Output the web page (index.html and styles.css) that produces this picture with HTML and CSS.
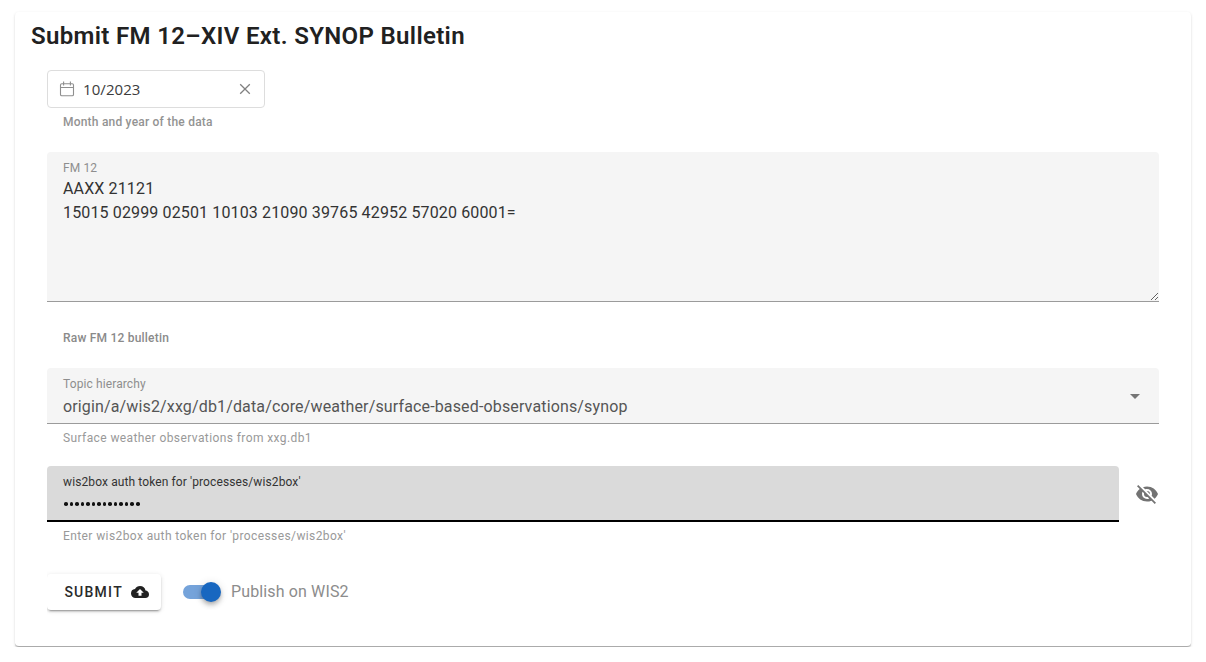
FILE: index.html
```html
<!DOCTYPE html>
<html lang="en">
<head>
<meta charset="utf-8">
<title>Submit FM 12–XIV Ext. SYNOP Bulletin</title>
<link rel="stylesheet" href="styles.css">
</head>
<body>
<main class="card">
  <h2 class="title"><span>Submit FM 12–XIV Ext. SYNOP Bulletin</span></h2>
  <form class="form">
    <div class="date">
      <svg class="date-icon" width="16" height="16" viewBox="0 0 16 16" fill="none" stroke="#8f8f8f" stroke-width="1.1"><rect x="1.5" y="2.7" width="13" height="12" rx="1.3"/><path d="M1.5 6.5h13M4.6 .6v3.8M11.4 .6v3.8"/></svg>
      <span class="date-value">10/2023</span>
      <svg width="12" height="12" viewBox="0 0 12 12" fill="none" stroke="#808080" stroke-width="1.3"><path d="M1.2 1.2l9.6 9.6M10.8 1.2l-9.6 9.6"/></svg>
    </div>
    <div class="caption date-caption"><span>Month and year of the data</span></div>

    <div class="field bulletin">
      <label class="label" for="fm12"><span>FM 12</span></label>
      <textarea id="fm12" class="area" spellcheck="false">AAXX 21121
15015 02999 02501 10103 21090 39765 42952 57020 60001=</textarea>
    </div>
    <div class="caption bulletin-caption"><span>Raw FM 12 bulletin</span></div>

    <div class="field topic">
      <div class="topic-text">
        <div class="label"><span>Topic hierarchy</span></div>
        <div class="topic-value"><span>origin/a/wis2/xxg/db1/data/core/weather/surface-based-observations/synop</span></div>
      </div>
      <svg width="24" height="24" viewBox="0 0 24 24" fill="#757575"><path d="M7 10l5 5 5-5z"/></svg>
    </div>
    <div class="hint"><span>Surface weather observations from xxg.db1</span></div>

    <div class="token-row">
      <div class="field token">
        <div class="label token-label"><span>wis2box auth token for 'processes/wis2box'</span></div>
        <div class="dots"><i></i><i></i><i></i><i></i><i></i><i></i><i></i><i></i><i></i><i></i><i></i><i></i><i></i><i></i></div>
      </div>
      <svg width="24" height="24" viewBox="0 0 24 24" fill="#737373"><path d="M11.83 9L15 12.16V12a3 3 0 0 0-3-3h-.17m-4.3.8l1.55 1.55c-.05.21-.08.42-.08.65a3 3 0 0 0 3 3c.22 0 .44-.03.65-.08l1.55 1.55c-.67.33-1.41.53-2.2.53a5 5 0 0 1-5-5c0-.79.2-1.53.53-2.2M2 4.27l2.28 2.28.45.45C3.08 8.3 1.78 10 1 12c1.73 4.39 6 7.5 11 7.5 1.55 0 3.03-.3 4.38-.84l.43.42L19.73 22 21 20.73 3.27 3M12 7a5 5 0 0 1 5 5c0 .64-.13 1.26-.36 1.82l2.93 2.93c1.5-1.25 2.7-2.89 3.43-4.75-1.73-4.39-6-7.5-11-7.5-1.4 0-2.74.25-4 .7l2.17 2.15C10.74 7.13 11.35 7 12 7z"/></svg>
    </div>
    <div class="hint token-hint"><span>Enter wis2box auth token for 'processes/wis2box'</span></div>

    <div class="actions">
      <button class="submit" type="button"><span>SUBMIT</span>
        <svg width="18" height="18" viewBox="0 0 24 24" fill="#212121"><path d="M14 13v4h-4v-4H7l5-5 5 5m2.35-2.97A7.49 7.49 0 0 0 12 4C9.11 4 6.6 5.64 5.35 8.03A6.004 6.004 0 0 0 0 14a6 6 0 0 0 6 6h13a5 5 0 0 0 5-5c0-2.64-2.05-4.78-4.65-4.97z"/></svg>
      </button>
      <div class="switch"><div class="thumb"></div></div>
      <span class="switch-label">Publish on WIS2</span>
    </div>
  </form>
</main>
</body>
</html>
```
FILE: styles.css
```css
* { box-sizing: border-box; }
body {
  margin: 0;
  padding: 12px 15px 0;
  background: #fff;
  font-family: Roboto, "Liberation Sans", sans-serif;
  color: #212121;
}
.card {
  height: 635px;
  width: 1176px;
  padding: 8px 16px;
  border-bottom: 1px solid #ababab;
  border-radius: 4px;
  box-shadow: 0 1px 1px 0 rgba(0,0,0,.12), 0 1px 3px 0 rgba(0,0,0,.12);
}
.title {
  margin: 0;
  font-size: 24px;
  line-height: 32px;
  font-weight: 600;
  letter-spacing: .34px;
}
.form { padding: 18px 16px 0; }
.date {
  width: 218px;
  height: 38px;
  padding: 0 13px 0 11px;
  border: 1px solid #ddd;
  border-radius: 4px;
  display: flex;
  align-items: center;
}
.date-value {
  flex: 1;
  margin-left: 8px;
  font-family: "Open Sans", sans-serif;
  font-size: 15px;
  letter-spacing: .08px;
  color: #3c3c3c;
}
.caption {
  padding-left: 16px;
  font-size: 12px;
  line-height: 16px;
  font-weight: 500;
  letter-spacing: .21px;
  color: #939393;
}
.date-caption { margin-top: 6px; }
.field {
  background: #f5f5f5;
  border-radius: 4px 4px 0 0;
  border-bottom: 1px solid #9b9b9b;
}
.label {
  display: block;
  font-size: 12px;
  line-height: 16px;
  letter-spacing: .11px;
  color: #8e8e8e;
}
.bulletin {
  height: 150px;
  margin-top: 22px;
  padding-top: 8px;
}
.bulletin .label { padding-left: 16px; }
.area {
  display: block;
  width: 100%;
  height: 125px;
  margin: 0;
  padding: 1px 16px 0;
  border: 0;
  outline: 0;
  background: transparent;
  font: 16px/24px Roboto, "Liberation Sans", sans-serif;
  letter-spacing: .14px;
  color: #333;
  resize: vertical;
}
.bulletin-caption { margin-top: 28px; color: #8a8a8a; }
.topic {
  height: 56px;
  margin-top: 22px;
  padding: 8px 12px 0 16px;
  display: flex;
  justify-content: space-between;
}
.topic svg { margin-top: 8px; }
.topic-value {
  margin-top: 3px;
  font-size: 16px;
  line-height: 24px;
  letter-spacing: .145px;
  color: #555;
}
.hint {
  padding-left: 16px;
  margin-top: 6px;
  font-size: 12px;
  line-height: 16px;
  letter-spacing: .4px;
  color: #999;
}
.token-row {
  margin-top: 20px;
  display: flex;
  align-items: center;
  gap: 16px;
}
.token {
  width: 1072px;
  height: 56px;
  padding: 8px 16px 0;
  background: #dadada;
  border-bottom: 2px solid #000;
}
.token-label { color: #333; }
.dots {
  display: flex;
  gap: 1.95px;
  padding: 12px 0 0 1px;
}
.dots i {
  width: 3.6px;
  height: 3.6px;
  border-radius: 50%;
  background: #111;
}
.actions {
  display: flex;
  align-items: center;
  height: 50px;
  margin-top: 23px;
  overflow: hidden;
}
.submit {
  width: 114px;
  height: 36px;
  padding: 0 12px 0 17.4px;
  border: 0;
  border-radius: 4px;
  background: #fff;
  display: flex;
  align-items: center;
  justify-content: space-between;
  font: 500 14px Roboto, "Liberation Sans", sans-serif;
  letter-spacing: 1.25px;
  color: #2a2a2a;
  box-shadow: 0 3px 1px -2px rgba(0,0,0,.2), 0 2px 2px 0 rgba(0,0,0,.14), 0 1px 5px 0 rgba(0,0,0,.12);
}
.switch {
  width: 36px;
  height: 14px;
  margin-left: 22px;
  border-radius: 7px;
  background: #75a3da;
  display: flex;
  align-items: center;
  justify-content: flex-end;
}
.thumb {
  width: 20px;
  height: 20px;
  flex: none;
  margin-right: -2px;
  border-radius: 50%;
  background: #1867c0;
  box-shadow: 0 2px 4px -1px rgba(0,0,0,.2), 0 4px 5px 0 rgba(0,0,0,.14), 0 1px 10px 0 rgba(0,0,0,.12);
}
.switch-label {
  margin-left: 12px;
  padding-bottom: 2px;
  font-size: 16px;
  letter-spacing: .13px;
  color: #8c8c8c;
}
```
